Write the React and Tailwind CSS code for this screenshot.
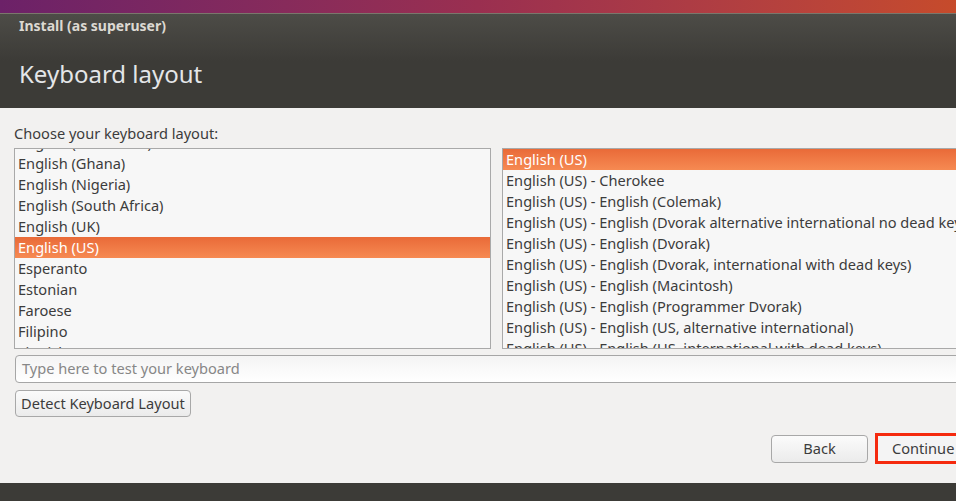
import React from "react";

const leftItems = [
  "English (Cameroon)",
  "English (Ghana)",
  "English (Nigeria)",
  "English (South Africa)",
  "English (UK)",
  "English (US)",
  "Esperanto",
  "Estonian",
  "Faroese",
  "Filipino",
  "Finnish",
];

const rightItems = [
  "English (US)",
  "English (US) - Cherokee",
  "English (US) - English (Colemak)",
  "English (US) - English (Dvorak alternative international no dead keys)",
  "English (US) - English (Dvorak)",
  "English (US) - English (Dvorak, international with dead keys)",
  "English (US) - English (Macintosh)",
  "English (US) - English (Programmer Dvorak)",
  "English (US) - English (US, alternative international)",
  "English (US) - English (US, international with dead keys)",
];

function Row({ text, selected }) {
  return (
    <div
      className={
        selected
          ? "h-[21px] leading-[21px] pl-[3px] whitespace-nowrap text-white bg-gradient-to-b from-[#e96a38] to-[#f68a52]"
          : "h-[21px] leading-[21px] pl-[3px] whitespace-nowrap text-[#3c3c3c]"
      }
    >
      {text}
    </div>
  );
}

export default function App() {
  return (
    <div
      className="w-[956px] h-[501px] overflow-hidden flex flex-col bg-[#f2f1f0] text-[14.6px]"
      style={{ fontFamily: '"Noto Sans", "Open Sans", sans-serif' }}
    >
      {/* desktop top strip */}
      <div className="h-[13px] shrink-0 bg-gradient-to-r from-[#6c2168] via-[#9a2f50] to-[#c64b2b]" />
      <div className="h-[1px] shrink-0 bg-[#7a776c]" />
      {/* header */}
      <div className="h-[94px] shrink-0 bg-gradient-to-b from-[#4d4c47] via-[#3c3b37] to-[#3c3b37] px-[19px] flex flex-col">
        <div className="mt-[2px] text-[14px] font-bold text-[#dcd9d2] leading-[20px]">
          Install (as superuser)
        </div>
        <div className="mt-[23px] text-[24px] text-[#e4e6e8] leading-[30px]">
          Keyboard layout
        </div>
      </div>
      {/* content */}
      <div className="flex-1 flex flex-col pl-[14px] pt-[15px]">
        <div className="leading-[20px] text-[#3c3c3c] h-[19px] whitespace-nowrap">Choose your keyboard layout:</div>
        <div className="flex gap-[11px] mt-[6px]">
          <div className="w-[477px] h-[201px] border border-[#a9a9a9] bg-[#f7f7f7] overflow-hidden shrink-0">
            <div className="mt-[-17px]">
              {leftItems.map((t) => (
                <Row key={t} text={t} selected={t === "English (US)"} />
              ))}
            </div>
          </div>
          <div className="w-[470px] h-[201px] border border-r-0 border-[#a9a9a9] bg-[#f7f7f7] overflow-hidden shrink-0">
            {rightItems.map((t, i) => (
              <Row key={t} text={t} selected={i === 0} />
            ))}
          </div>
        </div>
        <div className="mt-[6px] ml-[1px] h-[28px] w-[960px] shrink-0 rounded-[4px] border border-[#a6a6a6] bg-gradient-to-b from-[#f4f4f4] to-[#ffffff] flex items-center pl-[6px] text-[#878787] whitespace-nowrap">
          Type here to test your keyboard
        </div>
        <div className="mt-[7px] ml-[1px] flex">
          <div className="h-[27px] w-[176px] rounded-[4px] border border-[#a8a8a8] bg-gradient-to-b from-[#fbfbfb] to-[#ebebeb] flex items-center pl-[5px] text-[#3c3c3c] whitespace-nowrap">
            Detect Keyboard Layout
          </div>
        </div>
        <div className="mt-[16px] mr-[-24px] flex justify-end items-center">
          <div className="h-[28px] w-[97px] shrink-0 rounded-[4px] border border-[#a8a8a8] bg-gradient-to-b from-[#fbfbfb] to-[#ebebeb] flex items-center justify-center text-[#3c3c3c]">
            Back
          </div>
          <div className="ml-[7px] h-[31px] w-[105px] border-[3px] border-[#f52a0e] bg-[#f4f4f4] flex items-center pl-[14px] text-[#3c3c3c] shrink-0 whitespace-nowrap">
            Continue
          </div>
        </div>
      </div>
      <div className="h-[18px] shrink-0 bg-[#3c3b37]" />
    </div>
  );
}
